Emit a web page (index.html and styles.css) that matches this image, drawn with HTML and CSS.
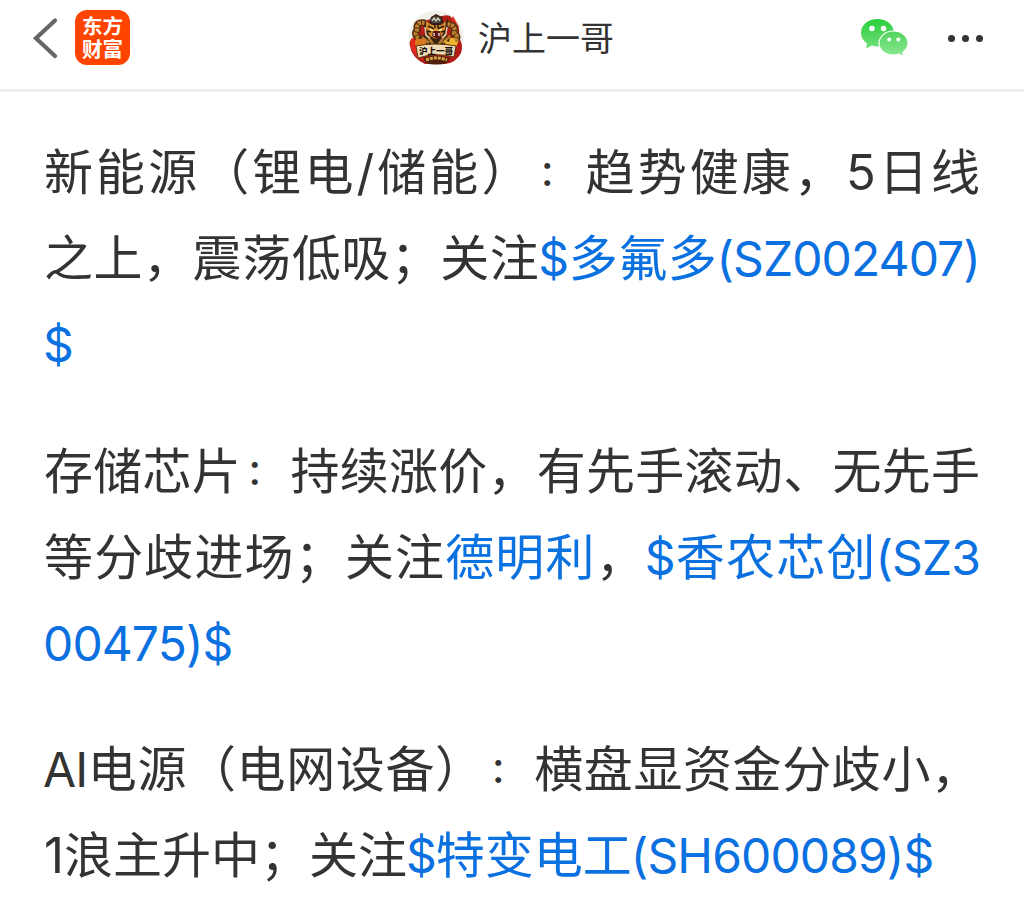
FILE: index.html
```
<!DOCTYPE html>
<html lang="zh-CN">
<head>
  <meta charset="UTF-8">
  <meta name="viewport" content="width=device-width, initial-scale=1.0">
  <title>沪上一哥</title>
  <link rel="stylesheet" href="styles.css">
</head>
<body>

  <!-- Header -->
  <header class="header">
    <div class="header-left">
      <svg class="back" width="26" height="42" viewBox="0 0 26 42">
        <path d="M23 3.500L4 21.300L23 39" fill="none" stroke="#666" stroke-width="4.200" stroke-linecap="round"/>
      </svg>
      <div class="logo"><span>东方</span><span>财富</span></div>
    </div>

    <div class="author">
      <svg class="avatar" width="56" height="56" viewBox="0 0 56 56">
        <circle cx="28" cy="28" r="27.500" fill="#f1f1ec"/>
        <path d="M34 6Q45 3 45 13Q54 17 50 27Q56 34 53 43Q48 53 37 54H17Q4 48 2 36Q0 30 8 26L12 12Z" fill="#b51b17"/>
        <path d="M3 29Q9 24 13 31L10 43L18 51L9 47Q1 38 3 29ZM45 6L51 17L48 26L42 14Z" fill="#e52a20"/>
        <path d="M17 13Q8 11 9 20Q5 25 12 29M39 14Q49 15 46 23Q53 28 44 32" fill="none" stroke="#56300f" stroke-width="7"/>
        <path d="M17 13Q8 11 9 20Q5 25 12 29M39 14Q49 15 46 23Q53 28 44 32" fill="none" stroke="#bd8131" stroke-width="4" stroke-dasharray="3 1"/>
        <path d="M11 27Q28 18 46 29L47 40H8Z" fill="#39230f"/>
        <path d="M14 27L21 33M18 24L25 34M42 26L35 33M38 24L31 34" stroke="#b27a2d" stroke-width="2.500"/>
        <path d="M17 10L21 13L23 7L28 4L34 7L36 13L40 9L39 20L35 28L28 31L20 27L16 18Z" fill="#392012"/>
        <path d="M18 11L24 15H33L38 11L37 20L33 27L28 29L22 26L18 19Z" fill="#d88a29"/>
        <path d="M22 9L28 6L34 9L32 13H24Z" fill="#454747"/>
        <path d="M24 11L26 8L28 11L30 8L32 11" fill="none" stroke="#d8ceb0" stroke-width="1.300"/>
        <path d="M20 16L26 19M36 16L30 19M27 13V18M30 13V18M19 21L23 22M37 21L33 22" stroke="#2b1a10" stroke-width="1.500"/>
        <path d="M22 19L26 21M34 19L30 21" stroke="#fff18b" stroke-width="1.500"/>
        <path d="M25 21H32L33 27L29 29L24 26Z" fill="#5c1712"/>
        <path d="M26 23V26M31 23V26" stroke="#fff" stroke-width="1.200"/>
        <path d="M17 17L18 25L22 28M39 17L38 24L34 28" fill="none" stroke="#ddd2b5" stroke-width="1.500"/>
        <path d="M7 33Q7 27 13 29Q19 28 18 34L13 37H8Z" fill="#d9791f"/>
        <path d="M36 30L41 32L42 28H46L48 32L51 30L48 37H39Z" fill="#f0b52c"/>
        <path d="M8 36Q27 32 48 36L46 47Q28 42 10 48Z" fill="#f0ddb5" stroke="#5d3212"/>
        <path d="M15 48Q28 43 42 48L39 53Q28 56 18 53Z" fill="#4e1f0d"/>
        <path d="M18 50Q28 46 39 50" fill="none" stroke="#dba342" stroke-width="3" stroke-dasharray="3 1"/>
        <text class="avatar-name" x="28" y="44" text-anchor="middle">沪上一哥</text>
      </svg>
      <span class="author-name">沪上一哥</span>
    </div>

    <div class="header-right">
      <svg class="wechat" width="50" height="40" viewBox="0 0 50 40">
        <defs>
          <linearGradient id="big" x1="0" y1="0" x2="0" y2="1">
            <stop offset="0" stop-color="#2bcf3c"/>
            <stop offset="1" stop-color="#73de7b"/>
          </linearGradient>
          <linearGradient id="small" x1="0" y1="0" x2="0" y2="1">
            <stop offset="0" stop-color="#51d55d"/>
            <stop offset="1" stop-color="#8be792"/>
          </linearGradient>
        </defs>
        <path d="M17.500 1C8 1 1 7 1 15C1 19.500 3.500 23 7 25.500L6 30.500L12 27.600Q15 28.500 18 28.500C27 28.500 34 22.500 34 15C34 7 26.500 1 17.500 1Z" fill="url(#big)"/>
        <path d="M33.500 13C25.500 13 19 18.500 19 25.200C19 32 25.500 37 33.500 37Q36.500 37 39 36.200L43.800 38.500L42.800 34.300C46 32 48 29 48 25.200C48 18.500 41.500 13 33.500 13Z" fill="url(#small)" stroke="#fff" stroke-width="1.200"/>
        <g fill="#fff">
          <circle cx="12" cy="10.500" r="2.700"/>
          <circle cx="23.500" cy="10.500" r="2.700"/>
          <circle cx="29.200" cy="21.500" r="2"/>
          <circle cx="38.300" cy="21.500" r="2"/>
        </g>
      </svg>
      <div class="more"><i></i><i></i><i></i></div>
    </div>
  </header>

  <!-- Post -->
  <main class="post">
    <p>
      <span class="line full">新能源（锂电/储能）<span class="colon">：</span>趋势健康，5日线</span>
      <span class="line full">之上，震荡低吸；关注<a><span class="code">$</span>多氟多<span class="code">(SZ002407)</span></a></span>
      <span class="line"><a class="code">$</a></span>
    </p>
    <p>
      <span class="line full">存储芯片<span class="colon">：</span>持续涨价，有先手滚动、无先手</span>
      <span class="line full">等分歧进场；关注<a>德明利</a>，<a><span class="code">$</span>香农芯创<span class="code">(SZ3</span></a></span>
      <span class="line"><a class="code">00475)$</a></span>
    </p>
    <p>
      <span class="line full"><span class="code">AI</span>电源（电网设备）<span class="colon">：</span>横盘显资金分歧小，</span>
      <span class="line">1浪主升中；关注<a><span class="code">$</span>特变电工<span class="code">(SH600089)$</span></a></span>
    </p>
  </main>

</body>
</html>
```
FILE: styles.css
```
* {
  box-sizing: border-box;
}

body {
  margin: 0;
  height: 907px;
  overflow: hidden;
  background: #fff;
  color: #333;
  font-family: Inter, "Noto Sans CJK SC", sans-serif;
}

.header {
  display: grid;
  grid-template-columns: 1fr auto 1fr;
  align-items: start;
  height: 92px;
  padding: 10px 41px 0 32px;
  border-bottom: 3px solid #eee;
}

.header-left,
.author,
.header-right {
  display: flex;
  align-items: center;
}

.back {
  margin-top: 1px;
}

.logo {
  display: flex;
  flex-direction: column;
  align-items: center;
  justify-content: center;
  width: 55px;
  height: 55px;
  margin-left: 17px;
  border-radius: 12px;
  background: #ff4400;
  color: #fff;
  font-size: 20.5px;
  font-weight: 700;
  line-height: 23px;
}

.author {
  margin: -1px -6px 0 1px;
}

.avatar-name {
  font-size: 8.5px;
  font-weight: 900;
  fill: #17110b;
}

.author-name {
  margin: 2px 0 0 14px;
  font-size: 34px;
  line-height: 56px;
}

.header-right {
  justify-content: flex-end;
  height: 56px;
}

.more {
  display: flex;
  gap: 7px;
  margin-left: 38px;
}

.more i {
  width: 7px;
  height: 7px;
  border-radius: 50%;
  background: #333;
}

.post {
  padding: 38px 44px 0;
}

.post p {
  margin: 0 0 40.5px;
  font-size: 49px;
  line-height: 86px;
  text-spacing-trim: space-all;
}

.line {
  display: block;
  height: 86px;
  white-space: nowrap;
}

.full {
  text-align: justify;
  text-align-last: justify;
}

.code {
  margin-left: -1px;
  font-size: 48px;
  line-height: 0;
  letter-spacing: -0.9px;
}

/* smaller colon, raised to the middle of the line */
.colon {
  margin-left: 5px;
  font-size: 35px;
  font-weight: 500;
  line-height: 0;
  letter-spacing: 9px;
  vertical-align: 4px;
}

.post a {
  color: #0b70e0;
}
```
